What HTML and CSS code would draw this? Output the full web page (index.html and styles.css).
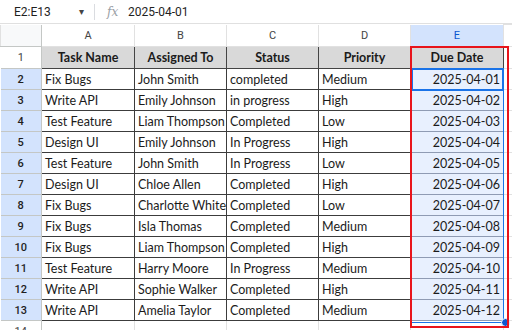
FILE: index.html
```html
<!DOCTYPE html>
<html lang="en">
<head>
    <meta charset="UTF-8">
    <meta name="viewport" content="width=device-width, initial-scale=1.0">
    <title>Tasks</title>
    <link rel="stylesheet" href="styles.css">
</head>
<body>
    <div class="formula-bar">
        <div class="name-box">E2:E13</div>
        <span class="caret">&#9662;</span>
        <span class="divider"></span>
        <span class="fx"><i>fx</i></span>
        <span class="formula">2025-04-01</span>
    </div>

    <div class="sheet">
        <table class="grid">
            <colgroup>
                <col class="c-num">
                <col class="c-a">
                <col class="c-b">
                <col class="c-c">
                <col class="c-d">
                <col class="c-e">
                <col class="c-f">
            </colgroup>
            <thead>
                <tr class="letters">
                    <th class="corner"></th>
                    <th>A</th>
                    <th>B</th>
                    <th>C</th>
                    <th>D</th>
                    <th class="sel">E</th>
                    <th class="extra"></th>
                </tr>
            </thead>
            <tbody id="rows">
                <tr class="head">
                    <td class="num plain">1</td>
                    <td>Task Name</td>
                    <td>Assigned To</td>
                    <td>Status</td>
                    <td>Priority</td>
                    <td>Due Date</td>
                    <td class="extra"></td>
                </tr>
            </tbody>
        </table>

        <div class="selection"></div>
        <div class="active-cell"></div>
        <div class="handle"></div>
        <div class="highlight"></div>
    </div>

    <script>
        const tasks = [
            ["Fix Bugs", "John Smith", "completed", "Medium", "2025-04-01"],
            ["Write API", "Emily Johnson", "in progress", "High", "2025-04-02"],
            ["Test Feature", "Liam Thompson", "Completed", "Low", "2025-04-03"],
            ["Design UI", "Emily Johnson", "In Progress", "High", "2025-04-04"],
            ["Test Feature", "John Smith", "In Progress", "Low", "2025-04-05"],
            ["Design UI", "Chloe Allen", "Completed", "High", "2025-04-06"],
            ["Fix Bugs", "Charlotte White", "Completed", "Low", "2025-04-07"],
            ["Fix Bugs", "Isla Thomas", "Completed", "Medium", "2025-04-08"],
            ["Fix Bugs", "Liam Thompson", "Completed", "High", "2025-04-09"],
            ["Test Feature", "Harry Moore", "In Progress", "Medium", "2025-04-10"],
            ["Write API", "Sophie Walker", "Completed", "High", "2025-04-11"],
            ["Write API", "Amelia Taylor", "Completed", "Medium", "2025-04-12"]
        ];

        const body = document.getElementById("rows");

        tasks.forEach((task, i) => {
            const tr = document.createElement("tr");
            tr.className = "data";
            let html = `<td class="num">${i + 2}</td>`;
            task.forEach((value, col) => {
                html += col === 4
                    ? `<td class="date">${value}</td>`
                    : `<td>${value}</td>`;
            });
            html += `<td class="extra"></td>`;
            tr.innerHTML = html;
            body.appendChild(tr);
        });

        const last = document.createElement("tr");
        last.className = "blank";
        last.innerHTML = `<td class="num plain">14</td><td></td><td></td><td></td><td></td><td></td><td class="extra"></td>`;
        body.appendChild(last);
    </script>
</body>
</html>
```

FILE: styles.css
```css
html, body {
    margin: 0;
    padding: 0;
    background: #fff;
    overflow: hidden;
}

body {
    font-family: Roboto, "Liberation Sans", sans-serif;
    color: #1f1f1f;
}

/* formula bar */

.formula-bar {
    height: 23px;
    border-bottom: 1px solid #e0e0e0;
    display: flex;
    align-items: center;
    font-size: 12px;
}

.name-box {
    width: 62px;
    padding-left: 14px;
}

.caret {
    font-size: 10px;
    color: #444;
    margin-left: 3px;
}

.divider {
    width: 1px;
    height: 16px;
    background: #dadce0;
    margin: 0 12px 0 10px;
}

.fx {
    font-family: "DejaVu Serif", serif;
    font-size: 12px;
    color: #9aa0a6;
    width: 20px;
}

.formula {
    margin-left: 1px;
}

/* grid */

.sheet {
    position: relative;
    overflow: hidden;
}

.grid {
    border-collapse: collapse;
    table-layout: fixed;
    width: 512px;
}

.c-num { width: 41px; }
.c-a { width: 93px; }
.c-b { width: 92px; }
.c-c { width: 92px; }
.c-d { width: 92px; }
.c-e { width: 93px; }
.c-f { width: 9px; }

.grid td,
.grid th {
    padding: 0 3px;
    white-space: nowrap;
    overflow: hidden;
    font-family: Lato, "Open Sans", sans-serif;
    font-size: 12.5px;
    color: #1b1b1b;
}

.letters th {
    height: 21px;
    font-family: Roboto, sans-serif;
    font-size: 11px;
    font-weight: normal;
    color: #444;
    text-align: center;
    border: 1px solid #e1e1e1;
    border-top: none;
}

.letters .corner {
    background: #f8f9fa;
    border-right-color: #c4c7c5;
    border-bottom-color: #c4c7c5;
}

.letters .sel {
    background: #d3e3fd;
    color: #0b57d0;
}

.head td {
    height: 21px;
    background: #d9d9d9;
    font-weight: bold;
    text-align: center;
    border: 1px solid #444;
}

.data td {
    height: 20px;
    border: 1px solid #3c3c3c;
}

.grid .num {
    font-family: Roboto, sans-serif;
    font-size: 11px;
    font-weight: 500;
    text-align: center;
    background: #d3e3fd;
    color: #1f1f1f;
    border: 1px solid #c4c7c5;
    border-left: none;
}

.grid .num.plain {
    background: #fff;
    font-weight: normal;
    color: #444;
}

.data .date {
    text-align: right;
    background: #e8f0fe;
    border-color: #8f9bb3;
    border-right-color: #3c3c3c;
}

.grid .extra {
    border: 1px solid #e1e1e1;
    background: #fff;
}

.blank td {
    height: 20px;
    border: 1px solid #e1e1e1;
}

.blank td:nth-child(2),
.blank td:nth-child(3),
.blank td:nth-child(4),
.blank td:nth-child(5),
.blank td:nth-child(6) {
    border-top-color: #3c3c3c;
}

/* selection overlays */

.selection {
    position: absolute;
    left: 411px;
    top: 44px;
    width: 91px;
    height: 253px;
    border: 1px solid #1a73e8;
    pointer-events: none;
}

.active-cell {
    position: absolute;
    left: 411px;
    top: 44px;
    width: 89px;
    height: 19px;
    border: 2px solid #1a73e8;
}

.handle {
    position: absolute;
    left: 501px;
    top: 294px;
    width: 7px;
    height: 7px;
    border-radius: 50%;
    background: #0b57d0;
    border: 1px solid #fff;
}

.highlight {
    position: absolute;
    left: 410px;
    top: 22px;
    width: 95px;
    height: 278px;
    border: 2px solid #e8141b;
}
```
